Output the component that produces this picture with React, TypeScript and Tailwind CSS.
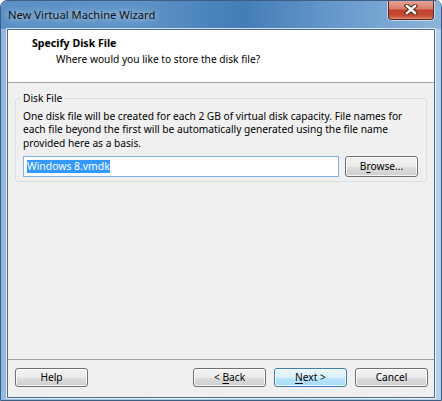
import React from 'react'

function WinButton({
  children,
  primary = false,
  className = '',
}: {
  children: React.ReactNode
  primary?: boolean
  className?: string
}) {
  const look = primary
    ? 'border-[#3c7fb1] bg-[linear-gradient(to_bottom,#eaf6fd_0%,#d9f0fc_50%,#bee6fd_51%,#a7d9f5_100%)]'
    : 'border-[#707070] bg-[linear-gradient(to_bottom,#f2f2f2_0%,#ebebeb_50%,#dddddd_51%,#cfcfcf_100%)]'
  return (
    <button
      type="button"
      className={`flex w-[73px] items-center justify-center rounded-[3px] border shadow-[inset_0_0_0_1px_rgba(255,255,255,0.8)] text-[10.2px] leading-[13px] text-black ${look} ${className}`}
    >
      <span className="whitespace-pre">{children}</span>
    </button>
  )
}

function CloseGlyph() {
  return (
    <svg width="14" height="11" viewBox="0 0 14 11">
      <path d="M3 2 L11 9 M11 2 L3 9" stroke="#4a1a12" strokeWidth="4.4" strokeLinecap="square" fill="none" />
      <path d="M3 2 L11 9 M11 2 L3 9" stroke="#ffffff" strokeWidth="2.6" strokeLinecap="square" fill="none" />
    </svg>
  )
}

function TitleBar() {
  return (
    <div className="flex h-[28px] shrink-0 bg-[linear-gradient(to_right,#5a90c6_0%,#5f94c8_30%,#437db8_55%,#6a9bcd_78%,#8db4da_100%)]">
      <div className="pl-[7px] pt-[7px] text-[11.2px] leading-[13px] text-[#111] [text-shadow:0_0_6px_rgba(255,255,255,0.9)]">
        New Virtual Machine Wizard
      </div>
      <div className="ml-auto mr-[7px] -mt-px flex h-[20px] w-[46px] items-center justify-center rounded-b-[4px] border border-t-0 border-[#5c2a22] bg-[linear-gradient(to_bottom,#eaa89a_0%,#d97e6c_45%,#c23f28_55%,#c84e36_85%,#e28a6c_100%)] shadow-[0_0_0_1px_rgba(255,255,255,0.5)]">
        <CloseGlyph />
      </div>
    </div>
  )
}

export default function App() {
  return (
    <div className="h-[401px] w-[442px] bg-white font-['Noto_Sans',sans-serif]">
      <div className="flex h-full w-full flex-col overflow-hidden rounded-t-[7px] border border-[#3e5f82] bg-[linear-gradient(to_right,#94b9de,#aacbec_40%,#9fc2e6_70%,#b4d2ef)]">
        <TitleBar />
        <div className="flex flex-1 flex-col px-[6px] pb-[2px]">
          <div className="flex flex-1 flex-col border border-[#4d6a88] bg-[#f0f0f0] shadow-[0_0_0_1px_rgba(255,255,255,0.75)]">
            {/* header */}
            <div className="h-[53px] shrink-0 border-b border-[#a0a0a0] bg-white pl-[24px] pt-[7px]">
              <div className="text-[10.6px] font-bold leading-[13px] text-black">Specify Disk File</div>
              <div className="ml-[24px] mt-[3px] text-[10.2px] leading-[13px] text-black">
                Where would you like to store the disk file?
              </div>
            </div>

            {/* body */}
            <fieldset className="mx-[7px] mt-[9px] rounded-[3px] border border-[#d5dfe5] pb-[4px] pl-[7px] pr-[8px]">
              <legend className="-ml-[2px] px-[2px] text-[10.2px] leading-[13px] text-black">Disk File</legend>
              <p className="mt-[5px] whitespace-nowrap text-[10.2px] leading-[13.3px] text-black">
                One disk file will be created for each 2 GB of virtual disk capacity. File names for
                <br />
                each file beyond the first will be automatically generated using the file name
                <br />
                provided here as a basis.
              </p>
              <div className="mt-[6px] flex h-[21px] gap-[6px]">
                <div className="flex flex-1 items-center border border-[#7eb4ea] bg-white pl-[3px]">
                  <span className="bg-[#3399ff] text-[10.4px] leading-[13px] text-white">Windows 8.vmdk</span>
                </div>
                <WinButton>
                  B<span className="underline underline-offset-2">r</span>owse...
                </WinButton>
              </div>
            </fieldset>

            <div className="flex-1" />

            {/* footer */}
            <div className="flex h-[38px] shrink-0 border-t border-[#a0a0a0] pl-[7px] pr-[6px] pt-[8px]">
              <WinButton className="h-[19px]">Help</WinButton>
              <div className="ml-auto flex gap-[8px]">
                <WinButton className="h-[19px]">
                  {'< '}
                  <span className="underline underline-offset-2">B</span>ack
                </WinButton>
                <WinButton primary className="h-[19px]">
                  <span className="underline underline-offset-2">N</span>
                  {'ext >'}
                </WinButton>
                <WinButton className="h-[19px]">Cancel</WinButton>
              </div>
            </div>
          </div>
        </div>
      </div>
    </div>
  )
}
